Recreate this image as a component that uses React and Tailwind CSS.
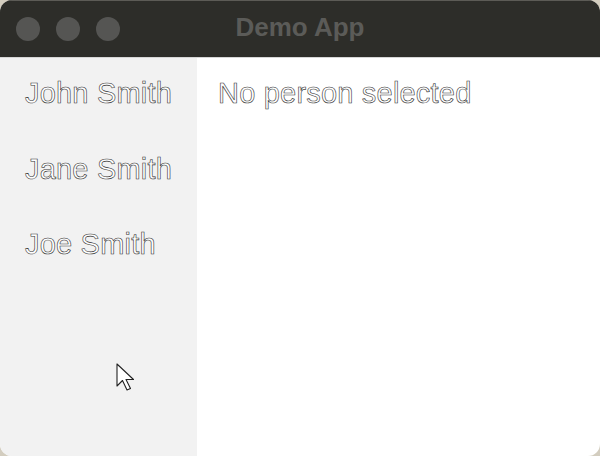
import React from "react";

const people = ["John Smith", "Jane Smith", "Joe Smith"];

function Cursor() {
  return (
    <svg width="26" height="34" viewBox="0 0 26 34" className="absolute left-[114px] top-[361px]">
      <path d="M3 3 L3 25 L8.5 19.5 L13 29 L16.5 27.5 L12 18.5 L19.5 18.5 Z" fill="#fff" stroke="#222" strokeWidth="1.1" strokeLinejoin="round" />
    </svg>
  );
}

function App() {
  return (
    <div className="w-[600px] h-[456px] bg-[#d3cdbf] overflow-hidden font-['Liberation_Sans',Arial,sans-serif]">
      <div className="relative w-full h-full rounded-[12px] overflow-hidden flex flex-col bg-white">
        {/* title bar */}
        <div className="relative h-[57px] shrink-0 bg-[#2d2d29] border-t border-[#5c5b56] flex items-center">
          <div className="flex gap-4 pl-4">
            <div className="w-6 h-6 rounded-full bg-[#555553]" />
            <div className="w-6 h-6 rounded-full bg-[#555553]" />
            <div className="w-6 h-6 rounded-full bg-[#555553]" />
          </div>
          <div className="absolute inset-0 flex items-center justify-center text-[26px] font-bold text-[#5b5b58] -mt-[3px]">
            Demo App
          </div>
        </div>
        <div className="h-px bg-[#d6d6d6] shrink-0" />

        <div className="flex flex-1">
          {/* sidebar */}
          <div className="w-[197px] bg-[#f2f2f2] flex flex-col pt-[18px] pl-[25px]">
            {people.map((p) => (
              <div
                key={p}
                className="h-[75.5px] text-[29px] leading-[34px] tracking-[0.2px] text-white [-webkit-text-stroke:0.6px_#333]"
              >
                {p}
              </div>
            ))}
          </div>
          {/* detail */}
          <div className="flex-1 pt-[18px] pl-[21px] text-[29px] leading-[34px] tracking-[0.2px] text-white [-webkit-text-stroke:0.6px_#333]">
            No person selected
          </div>
        </div>
        <Cursor />
      </div>
    </div>
  );
}

export default App;
